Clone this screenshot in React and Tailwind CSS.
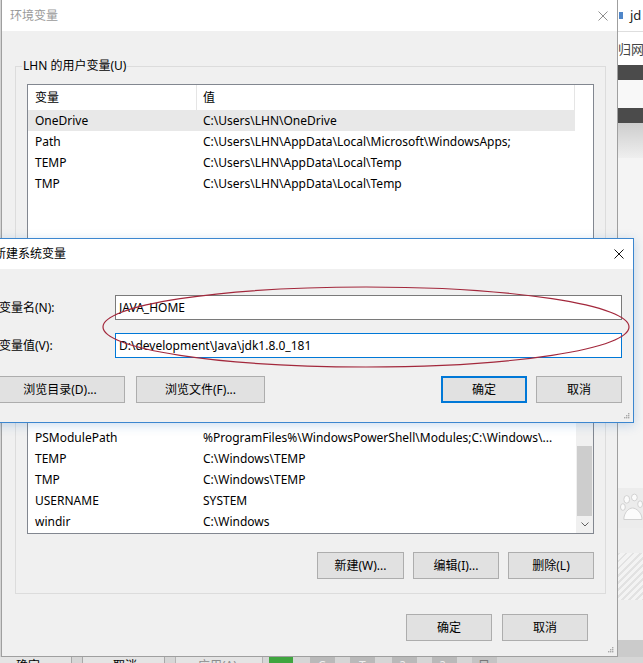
import React from "react";

const userVars = [
  ["OneDrive", "C:\\Users\\LHN\\OneDrive"],
  ["Path", "C:\\Users\\LHN\\AppData\\Local\\Microsoft\\WindowsApps;"],
  ["TEMP", "C:\\Users\\LHN\\AppData\\Local\\Temp"],
  ["TMP", "C:\\Users\\LHN\\AppData\\Local\\Temp"],
];

const systemVars = [
  ["ComSpec", "C:\\Windows\\system32\\cmd.exe"],
  ["NUMBER_OF_PROCESSORS", "4"],
  ["OS", "Windows_NT"],
  ["Path", "C:\\ProgramData\\Oracle\\Java\\javapath;C:\\Windows\\system32;..."],
  ["PATHEXT", ".COM;.EXE;.BAT;.CMD;.VBS;.VBE;.JS;.JSE;.WSF;.WSH;.MSC"],
  ["PROCESSOR_ARCHITECTURE", "AMD64"],
  ["PROCESSOR_IDENTIFIER", "Intel64 Family 6 Model 60 Stepping 3, GenuineIntel"],
  ["PROCESSOR_LEVEL", "6"],
  ["PROCESSOR_REVISION", "3c03"],
  ["PSModulePath", "%ProgramFiles%\\WindowsPowerShell\\Modules;C:\\Windows\\..."],
  ["TEMP", "C:\\Windows\\TEMP"],
  ["TMP", "C:\\Windows\\TEMP"],
  ["USERNAME", "SYSTEM"],
  ["windir", "C:\\Windows"],
];

const CloseX = ({ color }) => (
  <svg width="10" height="10" viewBox="0 0 10 10">
    <path d="M0.5 0.5L9.5 9.5M9.5 0.5L0.5 9.5" stroke={color} strokeWidth="1" />
  </svg>
);

const Grip = () => (
  <svg width="6" height="6" viewBox="0 0 6 6" fill="#a9a9a9">
    <rect x="4" y="0" width="1.4" height="1.4" />
    <rect x="2" y="2" width="1.4" height="1.4" />
    <rect x="4" y="2" width="1.4" height="1.4" />
    <rect x="0" y="4" width="1.4" height="1.4" />
    <rect x="2" y="4" width="1.4" height="1.4" />
    <rect x="4" y="4" width="1.4" height="1.4" />
  </svg>
);

const Btn = ({ children, className = "" }) => (
  <button className={`flex h-[27px] shrink-0 items-center justify-center bg-[#e1e1e1] text-[12px] text-black ${className}`}>
    {children}
  </button>
);

const Group = ({ label, children }) => (
  <fieldset className="border border-[#dcdcdc]">
    <legend className="ml-[6px] px-[1px] leading-[16px]">{label}</legend>
    <div className="px-[11px] pt-[10px] pb-[14px]">{children}</div>
  </fieldset>
);

const Header = () => (
  <div className="flex h-[25px] shrink-0">
    <div className="flex w-[169px] items-center border-r border-[#e5e5e5] pl-[7px]">变量</div>
    <div className="flex flex-1 items-center border-r border-[#e5e5e5] pl-[6px]">值</div>
  </div>
);

const Row = ({ name, value, selected }) => (
  <div className={`flex h-[21px] shrink-0 items-center whitespace-nowrap ${selected ? "bg-[#e8e8e8]" : ""}`}>
    <div className="w-[169px] overflow-hidden pl-[7px]">{name}</div>
    <div className="flex-1 overflow-hidden pl-[6px]">{value}</div>
  </div>
);

const VarButtons = () => (
  <div className="mt-[18px] flex justify-end gap-[9px]">
    <Btn className="w-[87px] border border-[#adadad]">新建(W)...</Btn>
    <Btn className="w-[86px] border border-[#adadad]">编辑(I)...</Btn>
    <Btn className="w-[86px] border border-[#adadad]">删除(L)</Btn>
  </div>
);

const Paw = () => (
  <svg width="24" height="30" viewBox="0 0 24 30">
    <g fill="#fbfbfb" stroke="#cfcfcf" strokeWidth="1">
      <ellipse cx="7" cy="6" rx="3" ry="4" />
      <ellipse cx="15" cy="4" rx="3" ry="3.5" />
      <ellipse cx="3" cy="14" rx="2.5" ry="3.5" />
      <ellipse cx="21" cy="11" rx="2.5" ry="3.5" />
      <path d="M4 27C4 20 9 15 13 15C17 15 23 20 23 27Z" />
    </g>
  </svg>
);

const RightStrip = () => (
  <div className="flex w-[25px] flex-col overflow-hidden">
    <div className="flex h-[31px] shrink-0 items-center bg-white">
      <div className="ml-[1px] h-[7px] w-[4px] bg-[#4f86c9]" />
      <span className="ml-[7px] text-[13px] text-[#222]">jd</span>
    </div>
    <div className="h-px shrink-0 bg-[#dedede]" />
    <div className="flex h-[33px] shrink-0 items-center whitespace-nowrap bg-white pt-[3px] text-[13px] text-[#444]">归网站</div>
    <div className="h-[15px] shrink-0 bg-[#4b4b4b]" />
    <div className="h-[28px] shrink-0 bg-[#f8f8f8]" />
    <div className="h-[15px] shrink-0 bg-[#4b4b4b]" />
    <div className="h-[35px] shrink-0 bg-gradient-to-b from-[#cdcdcd] to-[#efefef]" />
    <div className="flex-1 bg-[#f4f4f4]" />
    <div className="flex h-[40px] shrink-0 items-center bg-[#ececec] pl-[2px]">
      <Paw />
    </div>
    <div className="h-[25px] shrink-0 bg-[#eeeeee]" />
    <div className="h-[47px] shrink-0 bg-[repeating-linear-gradient(135deg,#e2e2e2_0px,#e2e2e2_2px,#f3f3f3_2px,#f3f3f3_5px)]" />
    <div className="h-[40px] shrink-0 bg-[#eeeeee]" />
    <div className="h-[17px] shrink-0 bg-[#cbcbcb]" />
  </div>
);

const BottomStrip = () => (
  <div className="flex h-[6px] overflow-hidden bg-[#d6d6d6] text-[12px] leading-[14px]">
    <div className="w-[72px] shrink-0 border-r border-[#a8a8a8] bg-[#e4e4e4] pl-[16px] pt-[2px]">确定</div>
    <div className="w-[10px] shrink-0" />
    <div className="w-[83px] shrink-0 border-x border-[#a8a8a8] bg-[#e4e4e4] pl-[30px] pt-[2px]">取消</div>
    <div className="w-[10px] shrink-0" />
    <div className="w-[88px] shrink-0 border-x border-[#b4b4b4] bg-[#e4e4e4] pl-[22px] pt-[2px] text-[#8c8c8c]">应用(A)</div>
    <div className="w-[6px] shrink-0" />
    <div className="w-[24px] shrink-0 bg-[#3fa53f]" />
    <div className="w-[17px] shrink-0" />
    <div className="w-[25px] shrink-0 bg-[#b9b9b9] pl-[8px] pt-[2px] text-[#eee]">C</div>
    <div className="w-[15px] shrink-0" />
    <div className="w-[25px] shrink-0 bg-[#b9b9b9] pl-[9px] pt-[2px] text-[#eee]">T</div>
    <div className="w-[17px] shrink-0" />
    <div className="w-[25px] shrink-0 bg-[#b9b9b9] pl-[8px] pt-[2px] text-[#eee]">?</div>
    <div className="w-[15px] shrink-0" />
    <div className="w-[25px] shrink-0 bg-[#b9b9b9] pl-[8px] pt-[2px] text-[#eee]">?</div>
    <div className="w-[15px] shrink-0" />
    <div className="w-[25px] shrink-0 bg-[#c4c4c4] pl-[6px] pt-[2px] text-[#777]">目</div>
  </div>
);

const NewVarDialog = () => (
  <div className="absolute left-[-13px] top-[238px] flex h-[185px] w-[647px] flex-col border border-[#3b86cf] bg-[#f0f0f0] shadow-[0_2px_10px_rgba(40,110,190,0.25)]">
    <div className="flex h-[30px] shrink-0 items-center justify-between bg-white pl-[6px] pr-[9px]">
      <span>新建系统变量</span>
      <CloseX color="#111" />
    </div>
    <div className="flex flex-col px-[11px] pt-[26px]">
      <div className="flex h-[25px] items-center">
        <span className="w-[116px] shrink-0">变量名(N):</span>
        <div className="flex h-full flex-1 items-center border border-[#7a7a7a] bg-white pl-[3px]">JAVA_HOME</div>
      </div>
      <div className="mt-[13px] flex h-[25px] items-center">
        <span className="w-[116px] shrink-0">变量值(V):</span>
        <div className="flex h-full flex-1 items-center border border-[#0078d7] bg-white pl-[3px]">
          D:\development\Java\jdk1.8.0_181
        </div>
      </div>
      <div className="ml-[-4px] mt-[18px] flex">
        <Btn className="w-[130px] border border-[#adadad]">浏览目录(D)...</Btn>
        <Btn className="ml-[11px] w-[129px] border border-[#adadad]">浏览文件(F)...</Btn>
        <Btn className="ml-auto w-[86px] border-2 border-[#0078d7]">确定</Btn>
        <Btn className="ml-[9px] w-[86px] border border-[#adadad]">取消</Btn>
      </div>
    </div>
    <div className="absolute bottom-[3px] right-[3px]">
      <Grip />
    </div>
  </div>
);

export default function App() {
  return (
    <div className="relative h-[663px] w-[643px] overflow-hidden bg-[#e8e8e8] font-['Noto_Sans','Noto_Sans_CJK_SC',sans-serif] text-[12px] text-black">
      <div className="flex h-[657px]">
        <div className="w-px bg-[#d4d4d4]" />
        <div className="relative flex w-[617px] flex-col border-x border-b border-[#9f9f9f] bg-[#f0f0f0]">
          <div className="flex h-[31px] shrink-0 items-center justify-between bg-white pl-[8px] pr-[9px]">
            <span className="text-[#9a9a9a]">环境变量</span>
            <CloseX color="#8e8e8e" />
          </div>
          <div className="flex flex-1 flex-col pl-[13px] pr-[11px] pt-[27px]">
            <Group label="LHN 的用户变量(U)">
              <div className="flex h-[171px] border border-[#828790] bg-white">
                <div className="flex w-[547px] flex-col">
                  <Header />
                  {userVars.map(([n, v], i) => (
                    <Row key={n} name={n} value={v} selected={i === 0} />
                  ))}
                </div>
              </div>
              <VarButtons />
            </Group>
            <div className="mt-[10px]">
              <Group label="系统变量(S)">
                <div className="flex h-[183px] border border-[#828790] bg-white">
                  <div className="flex w-[548px] flex-col">
                    <Header />
                    <div className="flex flex-1 flex-col justify-end overflow-hidden pb-[1px]">
                      {systemVars.map(([n, v]) => (
                        <Row key={n + v} name={n} value={v} />
                      ))}
                    </div>
                  </div>
                  <div className="flex w-[17px] flex-col bg-[#f0f0f0]">
                    <div className="h-[17px]" />
                    <div className="flex-1" />
                    <div className="mx-[1px] h-[70px] bg-[#cdcdcd]" />
                    <div className="flex h-[17px] items-center justify-center">
                      <svg width="8" height="5" viewBox="0 0 8 5">
                        <path d="M0.5 0.5L4 4L7.5 0.5" fill="none" stroke="#606060" strokeWidth="1" />
                      </svg>
                    </div>
                  </div>
                </div>
                <VarButtons />
              </Group>
            </div>
            <div className="mr-[18px] mt-[20px] flex justify-end gap-[10px]">
              <Btn className="w-[86px] border border-[#adadad]">确定</Btn>
              <Btn className="w-[86px] border border-[#adadad]">取消</Btn>
            </div>
          </div>
          <div className="absolute bottom-[3px] right-[3px]">
            <Grip />
          </div>
        </div>
        <RightStrip />
      </div>
      <BottomStrip />
      <NewVarDialog />
      <svg className="pointer-events-none absolute left-0 top-0" width="643" height="663" viewBox="0 0 643 663">
        <ellipse cx="366" cy="327" rx="263" ry="40" fill="none" stroke="#a3283c" strokeWidth="1.2" />
      </svg>
    </div>
  );
}
